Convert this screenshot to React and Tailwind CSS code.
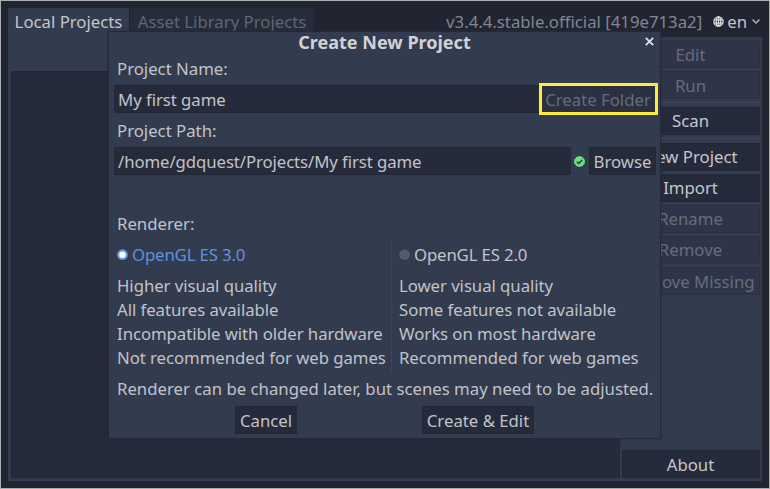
import React from "react";

const label = "h-6 px-[3px] leading-[23px] whitespace-pre";

function SideButton({ children, disabled, lowered }) {
  return (
    <button
      className={
        "flex h-[28px] w-full shrink-0 items-center justify-center whitespace-nowrap border pr-px " +
        (lowered ? "pt-px " : "") +
        (disabled
          ? "border-[#2b3143] bg-[#2f3548] text-[#666c7b]"
          : "border-[#232837] bg-[#262b3b] text-[#c4c6cb]")
      }
    >
      {children}
    </button>
  );
}

function Separator() {
  return <div className="mb-px h-px w-full shrink-0 bg-[#3e4659]" />;
}

function Globe() {
  return (
    <svg className="h-[11px] w-[11px]" viewBox="0 0 11 11" fill="none" stroke="#d7d9dd" strokeWidth="1.3">
      <circle cx="5.5" cy="5.5" r="4.6" />
      <ellipse cx="5.5" cy="5.5" rx="2.2" ry="4.6" />
      <path d="M1 3.9H10M1 7.1H10M5.5 1V10" />
    </svg>
  );
}

function RendererOption({ name, selected, lines }) {
  return (
    <div className="flex flex-col">
      <div className="flex h-[28px] items-center pl-[3px]">
        {selected ? (
          <svg className="mr-[4px] h-[12px] w-[11px]" viewBox="0 0 11 12">
            <circle cx="5.5" cy="5.7" r="5.4" fill="#6596e2" />
            <circle cx="5.5" cy="5.7" r="3.3" fill="#fff" />
          </svg>
        ) : (
          <svg className="mr-[4px] h-[12px] w-[11px]" viewBox="0 0 11 12">
            <circle cx="5.5" cy="5.7" r="5.4" fill="#555b69" />
          </svg>
        )}
        <span className={"tracking-[-0.14px] " + (selected ? "text-[#6390dc]" : "")}>{name}</span>
      </div>
      <div className="mt-[5px] tracking-[-0.05px]">
        {lines.map((l) => (
          <div key={l} className={label}>{l}</div>
        ))}
      </div>
    </div>
  );
}

function Dialog() {
  return (
    <div className="absolute top-[31px] left-[108px] flex h-[406px] w-[551px] flex-col bg-[#333b4f] px-[5px] shadow-[0_0_0_1px_#232938,0_0_2px_1px_#232938]">
      <div className="relative h-[25px] shrink-0 text-center text-[18px] leading-[20px] font-bold text-[#d0d2d6]">
        Create New Project
        <svg className="absolute top-[5px] right-[1px] h-[9px] w-[9px]" viewBox="0 0 9 9" stroke="#e0e1e4" strokeWidth="1.8">
          <path d="M.8.8 8.2 8.2M8.2.8.8 8.2" />
        </svg>
      </div>
      <div className={label}>Project Name:</div>
      <div className="mt-[4px] flex h-[28px] shrink-0">
        <div className="flex w-[425px] shrink-0 items-center border-y border-[#222736] bg-[#262b3b] pt-px pl-[4px] tracking-[-0.05px]">My first game</div>
        <div className="-my-[2px] flex h-[32px] w-[119px] shrink-0 items-center justify-center border-[3px] border-[#fdee35] bg-[#2b3042] pt-px pr-px whitespace-nowrap text-[#666c7b]">
          Create Folder
        </div>
      </div>
      <div className={label + " mt-[6px]"}>Project Path:</div>
      <div className="mt-[4px] flex h-[28px] shrink-0 items-center">
        <div className="flex h-full w-[457px] shrink-0 items-center border-y border-[#222736] bg-[#262b3b] pt-px pl-[4px] tracking-[-0.08px]">
          /home/gdquest/Projects/My first game
        </div>
        <svg className="mr-[4px] ml-[3px] h-[11px] w-[11px] shrink-0" viewBox="0 0 11 11">
          <path
            fill="#67e07b"
            d="M5.5 0 7 .6 8.800 1l.8 1.500L11 4l-.3 1.600.2 1.600-1.300 1.300L8.800 10 7 10.400 5.500 11 4 10.400 2.200 10l-.8-1.500L0 7.200l.3-1.600L0 4l1.400-1.500L2.200 1 4 .6Z"
          />
          <path d="M2.900 5.700 4.700 7.500 8.200 3.900" fill="none" stroke="#29374a" strokeWidth="1.500" />
        </svg>
        <button className="h-full w-[67px] shrink-0 border border-[#232837] bg-[#262b3b] pt-px">Browse</button>
      </div>
      <div className={label + " mt-[37px]"}>Renderer:</div>
      <div className="mt-[5px] flex h-[131px] shrink-0">
        <div className="w-[277px]">
          <RendererOption
            selected
            name="OpenGL ES 3.0"
            lines={["Higher visual quality", "All features available", "Incompatible with older hardware", "Not recommended for web games"]}
          />
        </div>
        <div className="mr-[4px] h-full w-px bg-[#3f4659]" />
        <RendererOption
          name="OpenGL ES 2.0"
          lines={["Lower visual quality", "Some features not available", "Works on most hardware", "Recommended for web games"]}
        />
      </div>
      <div className={label + " mt-[5px]"}>Renderer can be changed later, but scenes may need to be adjusted.</div>
      <div className="mt-[5px] flex h-[28px] shrink-0 pl-[121px]">
        <button className="w-[62px] border border-[#232837] bg-[#262b3b] pt-px">Cancel</button>
        <button className="ml-[125px] w-[112px] border border-[#232837] bg-[#262b3b] pt-px whitespace-nowrap">Create &amp; Edit</button>
      </div>
    </div>
  );
}

export default function App() {
  return (
    <div className="relative flex h-[489px] w-[770px] flex-col overflow-hidden border border-[#a8adae] bg-[#202531] px-[7px] pt-[7px] pb-[7px] font-['Noto_Sans',sans-serif] text-[16.75px] text-[#c0c3c8]">
      <div className="flex h-[29px] shrink-0">
        <div className="w-[121px] bg-[#333b4f] text-center leading-[27px] whitespace-nowrap text-[#c4c6cb]">Local Projects</div>
        <div className="ml-px w-[184px] bg-[#272c3b] text-center leading-[27px] whitespace-nowrap text-[#5f6573]">Asset Library Projects</div>
        <div className="ml-auto flex items-center pr-[2px] pb-[2px]">
          <span className="whitespace-nowrap text-[#82868f]">v3.4.4.stable.official [419e713a2]</span>
          <span className="ml-[11px]"><Globe /></span>
          <span className="ml-[3px]">en</span>
          <svg className="ml-[5px] h-[5px] w-[8px]" viewBox="0 0 8 5" fill="none" stroke="#a9acb3" strokeWidth="1.5">
            <path d="M.6.600 4 4 7.400.6" />
          </svg>
        </div>
      </div>
      <div className="flex min-h-0 flex-1 gap-[2px] bg-[#333b4f] pt-[3px] pr-[2px] pb-[3px] pl-[3px]">
        <div className="mt-[31px] flex-1 border border-[#222736] bg-[#262b3b]" />
        <div className="flex w-[138px] flex-col gap-[3px]">
          <SideButton disabled lowered>Edit</SideButton>
          <SideButton disabled lowered>Run</SideButton>
          <Separator />
          <SideButton>Scan</SideButton>
          <Separator />
          <SideButton>New Project</SideButton>
          <SideButton>Import</SideButton>
          <SideButton disabled>Rename</SideButton>
          <SideButton disabled>Remove</SideButton>
          <SideButton disabled lowered>Remove Missing</SideButton>
          <div className="flex-1" />
          <SideButton lowered>About</SideButton>
        </div>
      </div>
      <Dialog />
    </div>
  );
}
